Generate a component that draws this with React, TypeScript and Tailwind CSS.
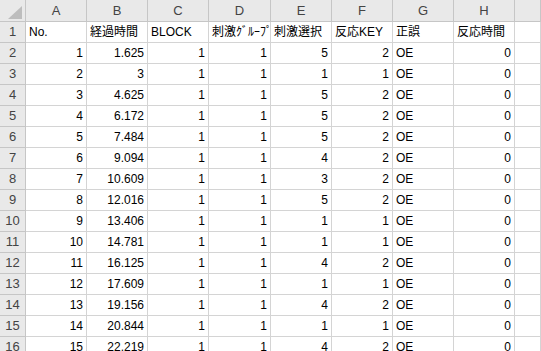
import React from 'react'

const cols = ['A', 'B', 'C', 'D', 'E', 'F', 'G', 'H', '']

const headerRow = ['No.', '経過時間', 'BLOCK', '刺激ｸﾞﾙｰﾌﾟ', '刺激選択', '反応KEY', '正誤', '反応時間']

// [No, 経過時間, BLOCK, グループ, 選択, KEY]
const rows: [number, string, number, number, number, number][] = [
  [1, '1.625', 1, 1, 5, 2],
  [2, '3', 1, 1, 1, 1],
  [3, '4.625', 1, 1, 5, 2],
  [4, '6.172', 1, 1, 5, 2],
  [5, '7.484', 1, 1, 5, 2],
  [6, '9.094', 1, 1, 4, 2],
  [7, '10.609', 1, 1, 3, 2],
  [8, '12.016', 1, 1, 5, 2],
  [9, '13.406', 1, 1, 1, 1],
  [10, '14.781', 1, 1, 1, 1],
  [11, '16.125', 1, 1, 4, 2],
  [12, '17.609', 1, 1, 1, 1],
  [13, '19.156', 1, 1, 4, 2],
  [14, '20.844', 1, 1, 1, 1],
  [15, '22.219', 1, 1, 4, 2],
]

const font = { fontFamily: '"Liberation Sans", "Noto Sans CJK JP", sans-serif' }

function Cell({ children, right }: { children?: React.ReactNode; right?: boolean }) {
  return (
    <div
      className={`h-[21px] border-r border-b border-[#d4d4d4] bg-white flex items-center overflow-hidden whitespace-nowrap px-[3px] text-[12px] text-black ${
        right ? 'justify-end' : 'justify-start'
      }`}
    >
      {children}
    </div>
  )
}

function RowHead({ n }: { n: number }) {
  return (
    <div className="h-[21px] border-r border-b border-[#c6c6c6] bg-[#e9e9e9] flex items-center justify-center text-[13px] text-[#444]">
      {n}
    </div>
  )
}

export default function App() {
  return (
    <div className="w-[541px] h-[351px] overflow-hidden bg-white" style={font}>
      <div className="grid grid-cols-[26px_61px_61px_61px_62px_61px_61px_61px_61px_1fr]">
        <div className="h-[22px] border-r border-b border-[#c6c6c6] bg-[#e9e9e9] relative">
          <div className="absolute left-[8px] top-[6px] w-0 h-0 border-l-[14px] border-l-transparent border-b-[13px] border-b-[#bdbdbd]" />
        </div>
        {cols.map((c, i) => (
          <div
            key={i}
            className="h-[22px] border-r border-b border-[#c6c6c6] bg-[#e9e9e9] flex items-center justify-center text-[13px] text-[#444]"
          >
            {c}
          </div>
        ))}

        <RowHead n={1} />
        {headerRow.map((h, i) => (
          <Cell key={i}>{h}</Cell>
        ))}
        <Cell />

        {rows.map((r, i) => (
          <React.Fragment key={i}>
            <RowHead n={i + 2} />
            <Cell right>{r[0]}</Cell>
            <Cell right>{r[1]}</Cell>
            <Cell right>{r[2]}</Cell>
            <Cell right>{r[3]}</Cell>
            <Cell right>{r[4]}</Cell>
            <Cell right>{r[5]}</Cell>
            <Cell>OE</Cell>
            <Cell right>0</Cell>
            <Cell />
          </React.Fragment>
        ))}
      </div>
    </div>
  )
}
